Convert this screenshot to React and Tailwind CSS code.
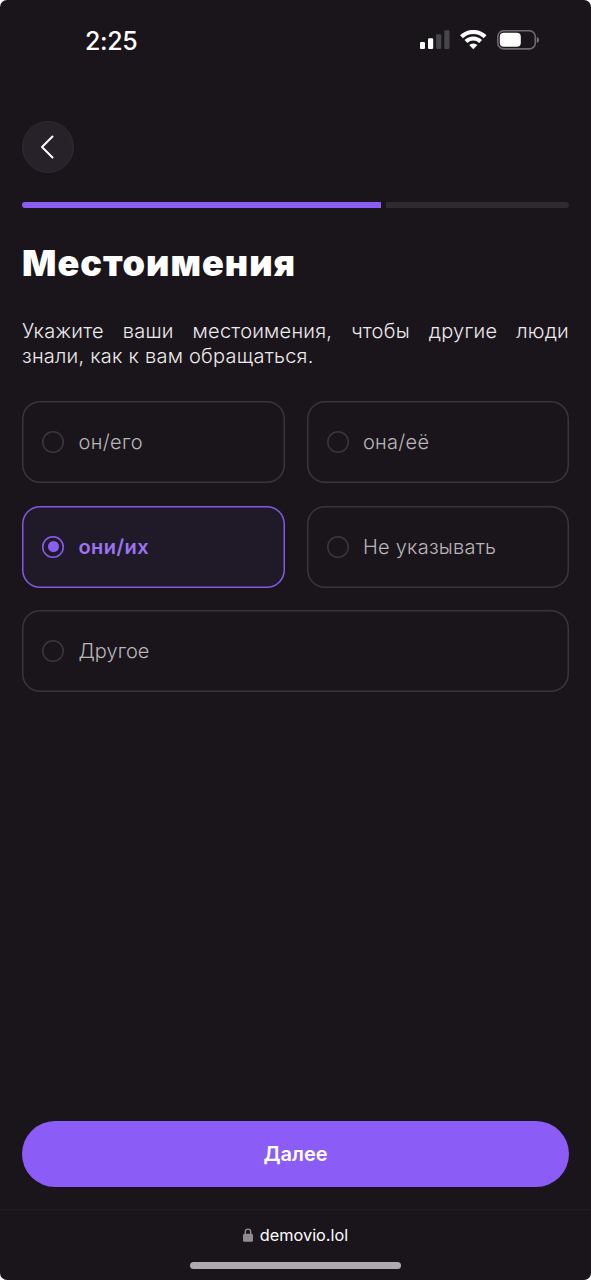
import { useState } from "react";
import { clsx } from "clsx";

const options = [
  { id: "he", label: "он/его", tracking: "tracking-[0.4px]" },
  { id: "she", label: "она/её", tracking: "tracking-[0.3px]" },
  { id: "they", label: "они/их", tracking: "tracking-[0.45px]" },
  { id: "none", label: "Не указывать", tracking: "tracking-[0.25px]" },
  { id: "other", label: "Другое", tracking: "tracking-[0.05px]", wide: true },
];

const StatusBar = () => (
  <header className="flex h-20 shrink-0 items-center justify-between pl-[85px] pr-[51px]">
    <span className="pt-0.5 text-[25px] font-medium leading-none tracking-[-0.4px]">2:25</span>
    <div className="flex items-center">
      <svg className="h-5 w-8" viewBox="0 0 32 20" fill="#fff">
        <rect x="-0.2" y="12" width="5.2" height="7" rx="1.3" />
        <rect x="8" y="8.3" width="5.2" height="10.7" rx="1.3" />
        <rect x="16.1" y="4.3" width="5.2" height="14.7" rx="1.3" fill="#48464a" />
        <rect x="24.3" y="0.2" width="5.2" height="18.8" rx="1.3" fill="#48464a" />
      </svg>
      <svg className="ml-2 h-5 w-[27px]" viewBox="0 0 27 20" fill="none" stroke="#fff" strokeWidth="4.1">
        <path d="M1.5 6.8a16.8 16.8 0 0 1 23.6 0" />
        <path d="M6 11.5a10.4 10.4 0 0 1 14.6 0" />
        <path d="M13.3 19.2l-4.1-4.1a5.8 5.8 0 0 1 8.2 0z" fill="#fff" stroke="none" />
      </svg>
      <svg className="ml-[10px] h-5 w-[43px]" viewBox="0 0 43 20">
        <rect x="0.8" y="0.7" width="37.5" height="18.2" rx="6" fill="none" stroke="#6d6a6f" strokeWidth="1.6" />
        <rect x="2.8" y="2.8" width="21" height="14" rx="4" fill="#fff" />
        <path d="M39.9 7v6c1.3-.6 2.1-1.7 2.1-3s-.8-2.4-2.1-3z" fill="#78757a" />
      </svg>
    </div>
  </header>
);

const Option = ({ option, selected, onSelect }) => (
  <button
    type="button"
    onClick={onSelect}
    className={clsx(
      "flex h-[82px] items-center rounded-[18px] pl-[20.4px] text-[20px]",
      option.wide && "col-span-2",
      option.tracking,
      selected
        ? "bg-[#201928] font-semibold text-[#9b74f0] shadow-[inset_0_0_0_1.5px_#8259e0]"
        : "font-[350] text-[#b9b6ba] shadow-[inset_0_0_0_1.5px_#39353b]"
    )}
  >
    <span
      className={clsx(
        "mr-[14px] flex size-[22px] items-center justify-center rounded-full",
        selected
          ? "shadow-[inset_0_0_0_1.5px_#8b5cf6]"
          : "shadow-[inset_0_0_0_1.5px_#3a373c]"
      )}
    >
      {selected && <span className="size-[11px] rounded-full bg-[#8b5cf6]" />}
    </span>
    {option.label}
  </button>
);

export default function App() {
  const [value, setValue] = useState("they");

  return (
    <div className="bg-white">
      <div className="flex h-[1280px] w-[591px] flex-col overflow-hidden rounded-[7px] bg-[#1a151a] font-['Inter',sans-serif] text-white">
        <StatusBar />

        <main className="flex flex-1 flex-col px-[22px] pt-[41px]">
          {/* Back */}
          <button
            type="button"
            className="flex size-[52px] items-center justify-center rounded-full border border-[#302a34] bg-[#272129]"
          >
            <svg className="h-6 w-4" viewBox="0 0 16 24" fill="none" stroke="#fff" strokeWidth="2" strokeLinecap="round" strokeLinejoin="round">
              <path d="M12.5 1.5L2 12l10.5 10.5" />
            </svg>
          </button>

          {/* Progress */}
          <div className="mt-[29px] flex h-[6px] gap-[5px]">
            <div className="w-[359px] rounded-l-full bg-[#8b5cf6]" />
            <div className="flex-1 rounded-r-full bg-[#2e2b2f]" />
          </div>

          <h1 className="mt-[33px] whitespace-nowrap text-[36px] font-black leading-[44px] tracking-[1px]">
            Местоимения
          </h1>

          <p className="mt-[34px] text-justify text-[20px] font-[350] leading-[25px] tracking-[0.23px] text-[#eceaec]">
            Укажите ваши местоимения, чтобы другие люди знали,&nbsp;как к вам обращаться.
          </p>

          <div className="mt-[32.2px] grid grid-cols-2 gap-x-[22px] gap-y-[22.4px]">
            {options.map((option) => (
              <Option
                key={option.id}
                option={option}
                selected={value === option.id}
                onSelect={() => setValue(option.id)}
              />
            ))}
          </div>

          <button
            type="button"
            className="mb-[22px] mt-auto h-[66px] rounded-full bg-[#8b5cf6] text-[20px] font-semibold"
          >
            Далее
          </button>
        </main>

        {/* Browser bar */}
        <footer className="flex h-[71px] shrink-0 flex-col items-center border-t border-[#1d191e] pt-[14px]">
          <div className="flex h-[22px] items-center gap-[7px] text-[16.3px]">
            <svg className="h-[14px] w-[10px]" viewBox="0 0 10 14">
              <rect y="5.8" width="10" height="8" rx="1.5" fill="#8f8c91" />
              <path d="M2.3 7V3.8a2.7 2.7 0 0 1 5.4 0V7" fill="none" stroke="#8f8c91" strokeWidth="1.4" />
            </svg>
            <span>demovio.lol</span>
          </div>
          <div className="mt-[16px] h-[7px] w-[211px] rounded-full bg-[#adabad]" />
        </footer>
      </div>
    </div>
  );
}
